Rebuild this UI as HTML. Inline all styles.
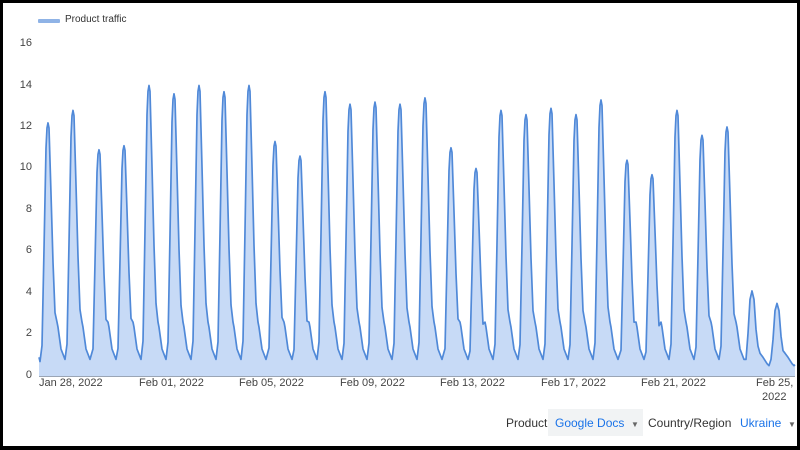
<!DOCTYPE html>
<html><head><meta charset="utf-8"><style>
body{margin:0;width:800px;height:450px;overflow:hidden;background:#000;font-family:"Liberation Sans",Arial,sans-serif;}
#f{position:absolute;left:3px;top:3px;width:794px;height:443px;background:#fff;}
.t{position:absolute;font-size:11px;color:#444;white-space:nowrap;}
.y{position:absolute;font-size:11px;color:#444;width:20px;text-align:right;left:12px;}
</style></head><body>
<div id="f"></div>
<svg id="s" width="800" height="450" style="position:absolute;left:0;top:0">
<path id="a" fill="#c7daf6" stroke="none"/>
<line x1="39" y1="376.5" x2="795" y2="376.5" stroke="#9aa5b5" stroke-width="1"/>
<path id="l" fill="none" stroke="#5089d8" stroke-width="1.7" stroke-linejoin="round"/>
<rect x="38" y="19" width="22" height="4" rx="1" fill="#8fb3e6"/>
</svg>
<div class="t" style="left:65px;top:14px;font-size:10px;color:#333">Product traffic</div>
<div class="y" style="top:37px">16</div>
<div class="y" style="top:79px">14</div>
<div class="y" style="top:120px">12</div>
<div class="y" style="top:161px">10</div>
<div class="y" style="top:203px">8</div>
<div class="y" style="top:244px">6</div>
<div class="y" style="top:286px">4</div>
<div class="y" style="top:327px">2</div>
<div class="y" style="top:369px">0</div>
<div class="t" style="left:39px;top:377px">Jan 28, 2022</div>
<div class="t" style="left:139px;top:377px">Feb 01, 2022</div>
<div class="t" style="left:239px;top:377px">Feb 05, 2022</div>
<div class="t" style="left:340px;top:377px">Feb 09, 2022</div>
<div class="t" style="left:440px;top:377px">Feb 13, 2022</div>
<div class="t" style="left:541px;top:377px">Feb 17, 2022</div>
<div class="t" style="left:641px;top:377px">Feb 21, 2022</div>
<div class="t" style="left:756px;top:377px">Feb 25,</div>
<div class="t" style="left:762px;top:391px">2022</div>
<div class="t" style="left:506px;top:416px;font-size:12px;color:#333">Product</div>
<div style="position:absolute;left:548px;top:409px;width:95px;height:27px;background:#f1f3f4"></div>
<div class="t" style="left:555px;top:416px;font-size:12px;color:#1a73e8">Google Docs &nbsp;<span style="font-size:8px;color:#666">▼</span></div>
<div class="t" style="left:648px;top:416px;font-size:12px;color:#333">Country/Region</div>
<div class="t" style="left:740px;top:416px;font-size:12px;color:#1a73e8">Ukraine &nbsp;<span style="font-size:8px;color:#666">▼</span></div>
<script>
var P=[[48,12.2],[73,12.8],[99,10.9],[124,11.1],[149,14],[174,13.6],[199,14],[224,13.7],[249,14],[275,11.3],[300,10.6],[325,13.7],[350,13.1],[375,13.2],[400,13.1],[425,13.4],[451,11],[476,10],[501,12.8],[526,12.6],[551,12.9],[576,12.6],[601,13.3],[627,10.4],[652,9.7],[677,12.8],[702,11.6],[727,12],[752,4.1],[777,3.5]];
function Y(v){return 376-v*20.75;}
var pts=[[39,0.9],[40,0.7]];
P.forEach(function(q,i){var p=q[0],h=q[1];
 if(h<5){
  pts.push([p-6,0.8],[p-4,h*0.5],[p-2,h*0.9],[p,h],[p+2,h*0.9],[p+4,h*0.55],[p+6,h*0.35],[p+8,1.1],[p+11,0.9],[p+15,0.6],[p+17,0.5]);
 } else
 pts.push([p-6,h*0.12],[p-4,h*0.5],[p-2,h*0.9],[p-1,h*0.98],[p,h],[p+1,h*0.98],[p+3,h*0.72],[p+5,h*0.45],[p+7,h*0.25],[p+9,2.6],[p+10,2.35],[p+13,1.3],[p+17,0.8]);
});
pts.push([795,0.55]);
var d="M"+pts.map(function(p){return p[0].toFixed(1)+","+Y(p[1]).toFixed(1)}).join(" L");
document.getElementById("l").setAttribute("d",d);
document.getElementById("a").setAttribute("d",d+" L795,376 L39,376 Z");
</script>
</body></html>
